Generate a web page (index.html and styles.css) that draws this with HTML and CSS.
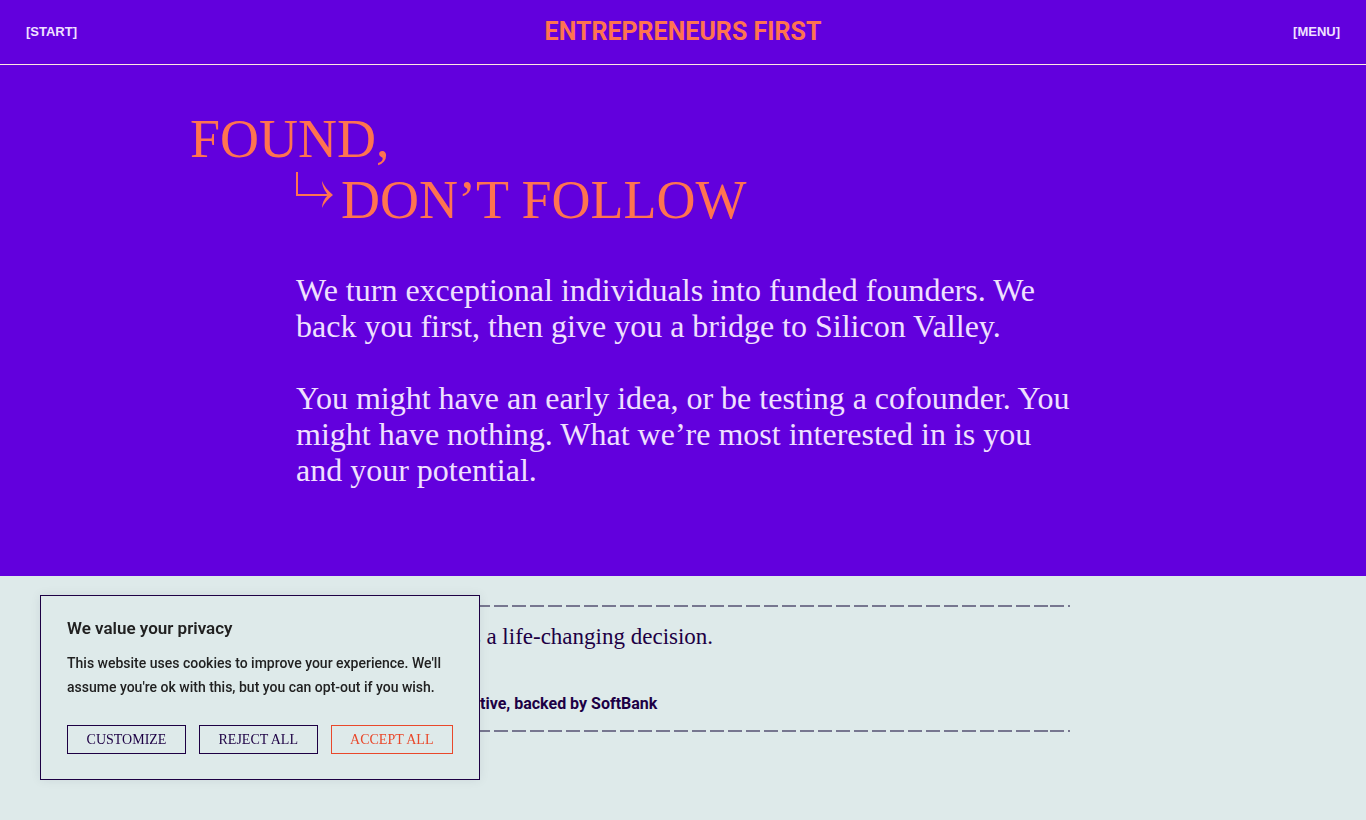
FILE: index.html
```html
<!DOCTYPE html>
<html lang="en">
<head>
  <meta charset="UTF-8">
  <meta name="viewport" content="width=device-width, initial-scale=1.0">
  <title>Entrepreneurs First</title>
  <link rel="stylesheet" href="styles.css">
</head>
<body>
  <header class="site-header">
    <a class="nav-link" href="#start">[START]</a>
    <a class="logo" href="#">ENTREPRENEURS FIRST</a>
    <button class="nav-link menu-button" type="button">[MENU]</button>
  </header>

  <main>
    <section class="hero" id="start">
      <div class="container">
        <h1 class="hero-title">
          <span class="title-line">FOUND,</span>
          <span class="title-line title-indent">
            <svg class="title-arrow" viewBox="0 0 38 40" aria-hidden="true">
              <path d="M2 2v23h34" fill="none" stroke="currentColor" stroke-width="2"/>
              <path d="M27 11c0 5 3 10 6 14c-4 4-6 8-6 13c2-5 6-9 11-13c-5-4-9-9-11-14z" fill="currentColor"/>
            </svg>
            DON’T FOLLOW
          </span>
        </h1>
        <div class="hero-text">
          <p>We turn exceptional individuals into funded founders. We back you first, then give you a bridge to Silicon Valley.</p>
          <p>You might have an early idea, or be testing a cofounder. You might have nothing. What we’re most interested in is you and your potential.</p>
        </div>
      </div>
    </section>

    <section class="quotes">
      <div class="container">
        <figure class="quote">
          <blockquote class="quote-text">Applying to EF was a life-changing decision.</blockquote>
          <figcaption class="quote-author">Founder and Group Executive, backed by SoftBank</figcaption>
        </figure>
      </div>
    </section>
  </main>

  <div class="cookie-banner" role="dialog" aria-labelledby="cookie-title">
    <h2 class="cookie-title" id="cookie-title">We value your privacy</h2>
    <p class="cookie-text">This website uses cookies to improve your experience. We'll assume you're ok with this, but you can opt-out if you wish.</p>
    <div class="cookie-actions">
      <button class="cookie-button" type="button">CUSTOMIZE</button>
      <button class="cookie-button" type="button">REJECT ALL</button>
      <button class="cookie-button cookie-accept" type="button">ACCEPT ALL</button>
    </div>
  </div>
</body>
</html>
```

FILE: styles.css
```css
:root {
  --purple: #6200dd;
  --orange: #ff7350;
  --lilac: #f0e0ff;
  --mint: #deeaea;
  --ink: #1d0044;
  --serif: "Liberation Serif", "Times New Roman", serif;
  --sans: Roboto, "Liberation Sans", sans-serif;
}

* {
  margin: 0;
  padding: 0;
  box-sizing: border-box;
}

body {
  min-height: 100vh;
  background: var(--mint);
  color: var(--ink);
  font-family: var(--sans);
}

/* Header */
.site-header {
  display: grid;
  grid-template-columns: 1fr auto 1fr;
  align-items: center;
  height: 65px;
  padding: 0 26px;
  background: var(--purple);
  border-bottom: 1px solid #ffe8e0;
}

.nav-link {
  color: var(--lilac);
  font-family: "Liberation Sans", Arial, sans-serif;
  font-size: 13px;
  font-weight: 700;
  line-height: 16px;
  text-decoration: none;
}

.menu-button {
  justify-self: end;
  background: none;
  border: none;
  cursor: pointer;
}

.logo {
  color: var(--orange);
  font-size: 25px;
  font-weight: 700;
  line-height: 32px;
  text-decoration: none;
}

/* Hero */
.container {
  max-width: 986px;
  margin: 0 auto;
}

.hero {
  padding: 44px 0 88px;
  background: var(--purple);
}

.hero-title {
  color: var(--orange);
  font-family: var(--serif);
  font-size: 54px;
  font-weight: 400;
  line-height: 61px;
}

.title-line {
  display: block;
}

.title-indent {
  display: flex;
  gap: 8px;
  padding-left: 105px;
}

.title-arrow {
  flex: none;
  width: 38px;
  height: 40px;
}

.hero-text {
  margin-top: 41px;
  padding: 0 100px 0 106px;
  color: var(--lilac);
  font-family: var(--serif);
  font-size: 32px;
  line-height: 36px;
}

.hero-text p + p {
  margin-top: 36px;
}

/* Quote */
.quotes {
  padding: 29px 0 88px;
}

.quote {
  margin: 0 106px;
  padding: 16px 0;
  background-image:
    repeating-linear-gradient(90deg, #777790 0 14px, transparent 14px 18px),
    repeating-linear-gradient(90deg, #777790 0 14px, transparent 14px 18px);
  background-position: left top, left bottom;
  background-repeat: repeat-x;
  background-size: 754px 2px;
}

.quote-text {
  font-family: var(--serif);
  font-size: 23px;
  line-height: 32px;
}

.quote-author {
  margin-top: 39px;
  font-size: 16px;
  font-weight: 700;
  line-height: 24px;
}

/* Cookie banner */
.cookie-banner {
  position: fixed;
  bottom: 40px;
  left: 40px;
  width: 440px;
  max-width: calc(100% - 80px);
  padding: 20px 26px 25px;
  background: var(--mint);
  border: 1px solid var(--ink);
  box-shadow: 0 0 10px rgba(0, 0, 60, 0.08);
  color: #212121;
}

.cookie-title {
  font-size: 17px;
  font-weight: 600;
  line-height: 24px;
}

.cookie-text {
  margin-top: 11px;
  font-size: 14px;
  font-weight: 500;
  line-height: 24px;
}

.cookie-actions {
  display: flex;
  gap: 13px;
  margin-top: 26px;
}

.cookie-button {
  flex: 1 1 auto;
  height: 29px;
  background: transparent;
  border: 1px solid var(--ink);
  color: var(--ink);
  font-family: var(--serif);
  font-size: 14px;
  line-height: 24px;
  cursor: pointer;
}

.cookie-accept {
  border-color: #e9482b;
  color: #e9482b;
}
```
